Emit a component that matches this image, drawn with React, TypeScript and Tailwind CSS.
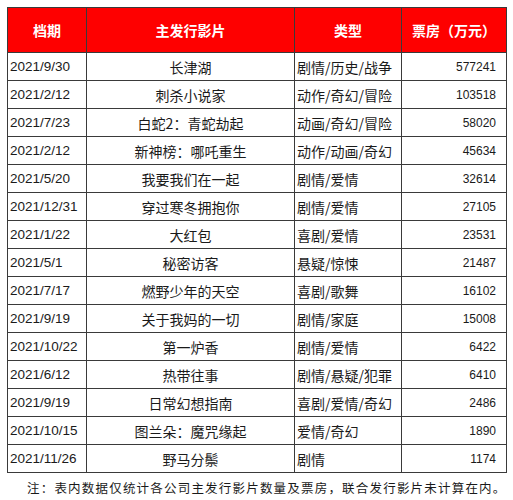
const rows: [string, string, string, string][] = [
  ["2021/9/30", "长津湖", "剧情/历史/战争", "577241"],
  ["2021/2/12", "刺杀小说家", "动作/奇幻/冒险", "103518"],
  ["2021/7/23", "白蛇2：青蛇劫起", "动画/奇幻/冒险", "58020"],
  ["2021/2/12", "新神榜：哪吒重生", "动作/动画/奇幻", "45634"],
  ["2021/5/20", "我要我们在一起", "剧情/爱情", "32614"],
  ["2021/12/31", "穿过寒冬拥抱你", "剧情/爱情", "27105"],
  ["2021/1/22", "大红包", "喜剧/爱情", "23531"],
  ["2021/5/1", "秘密访客", "悬疑/惊悚", "21487"],
  ["2021/7/17", "燃野少年的天空", "喜剧/歌舞", "16102"],
  ["2021/9/19", "关于我妈的一切", "剧情/家庭", "15008"],
  ["2021/10/22", "第一炉香", "剧情/爱情", "6422"],
  ["2021/6/12", "热带往事", "剧情/悬疑/犯罪", "6410"],
  ["2021/9/19", "日常幻想指南", "喜剧/爱情/奇幻", "2486"],
  ["2021/10/15", "图兰朵：魔咒缘起", "爱情/奇幻", "1890"],
  ["2021/11/26", "野马分鬃", "剧情", "1174"],
];

const cjk = "font-['Noto_Sans_CJK_SC',sans-serif]";
const num = "font-['Liberation_Sans','Noto_Sans_CJK_SC',sans-serif]";

export default function App() {
  return (
    <div className="w-[513px] h-[500px] bg-white pt-[7px] pl-[7px]">
      <table className="border-collapse table-fixed w-[499px] text-[#1a1a1a]">
        <colgroup>
          <col className="w-[79px]" />
          <col className="w-[208px]" />
          <col className="w-[107px]" />
          <col className="w-[105px]" />
        </colgroup>
        <thead>
          <tr className={`h-[45px] bg-[#fe0000] text-white text-[14px] font-bold ${cjk}`}>
            <th className="border border-[#3a3a3a] text-center p-0">档期</th>
            <th className="border border-[#3a3a3a] text-center p-0">主发行影片</th>
            <th className="border border-[#3a3a3a] text-center p-0">类型</th>
            <th className="border border-[#3a3a3a] text-center p-0">票房（万元）</th>
          </tr>
        </thead>
        <tbody>
          {rows.map((r, i) => (
            <tr key={i} className="h-[28px]">
              <td className={`border border-[#3a3a3a] pl-[2px] p-0 text-[13.5px] leading-none ${num}`}>{r[0]}</td>
              <td className={`border border-[#3a3a3a] p-0 text-center text-[14px] leading-none ${cjk}`}>{r[1]}</td>
              <td className={`border border-[#3a3a3a] pl-[2px] p-0 text-[14px] leading-none ${cjk}`}>{r[2]}</td>
              <td className={`border border-[#3a3a3a] p-0 pr-[10px] text-right text-[12px] leading-none ${num}`}>{r[3]}</td>
            </tr>
          ))}
        </tbody>
      </table>
      <p className={`mt-[6px] pl-[20px] text-[12.5px] tracking-[1.2px] text-[#1a1a1a] whitespace-nowrap ${cjk}`}>
        注：表内数据仅统计各公司主发行影片数量及票房，联合发行影片未计算在内。
      </p>
    </div>
  );
}
